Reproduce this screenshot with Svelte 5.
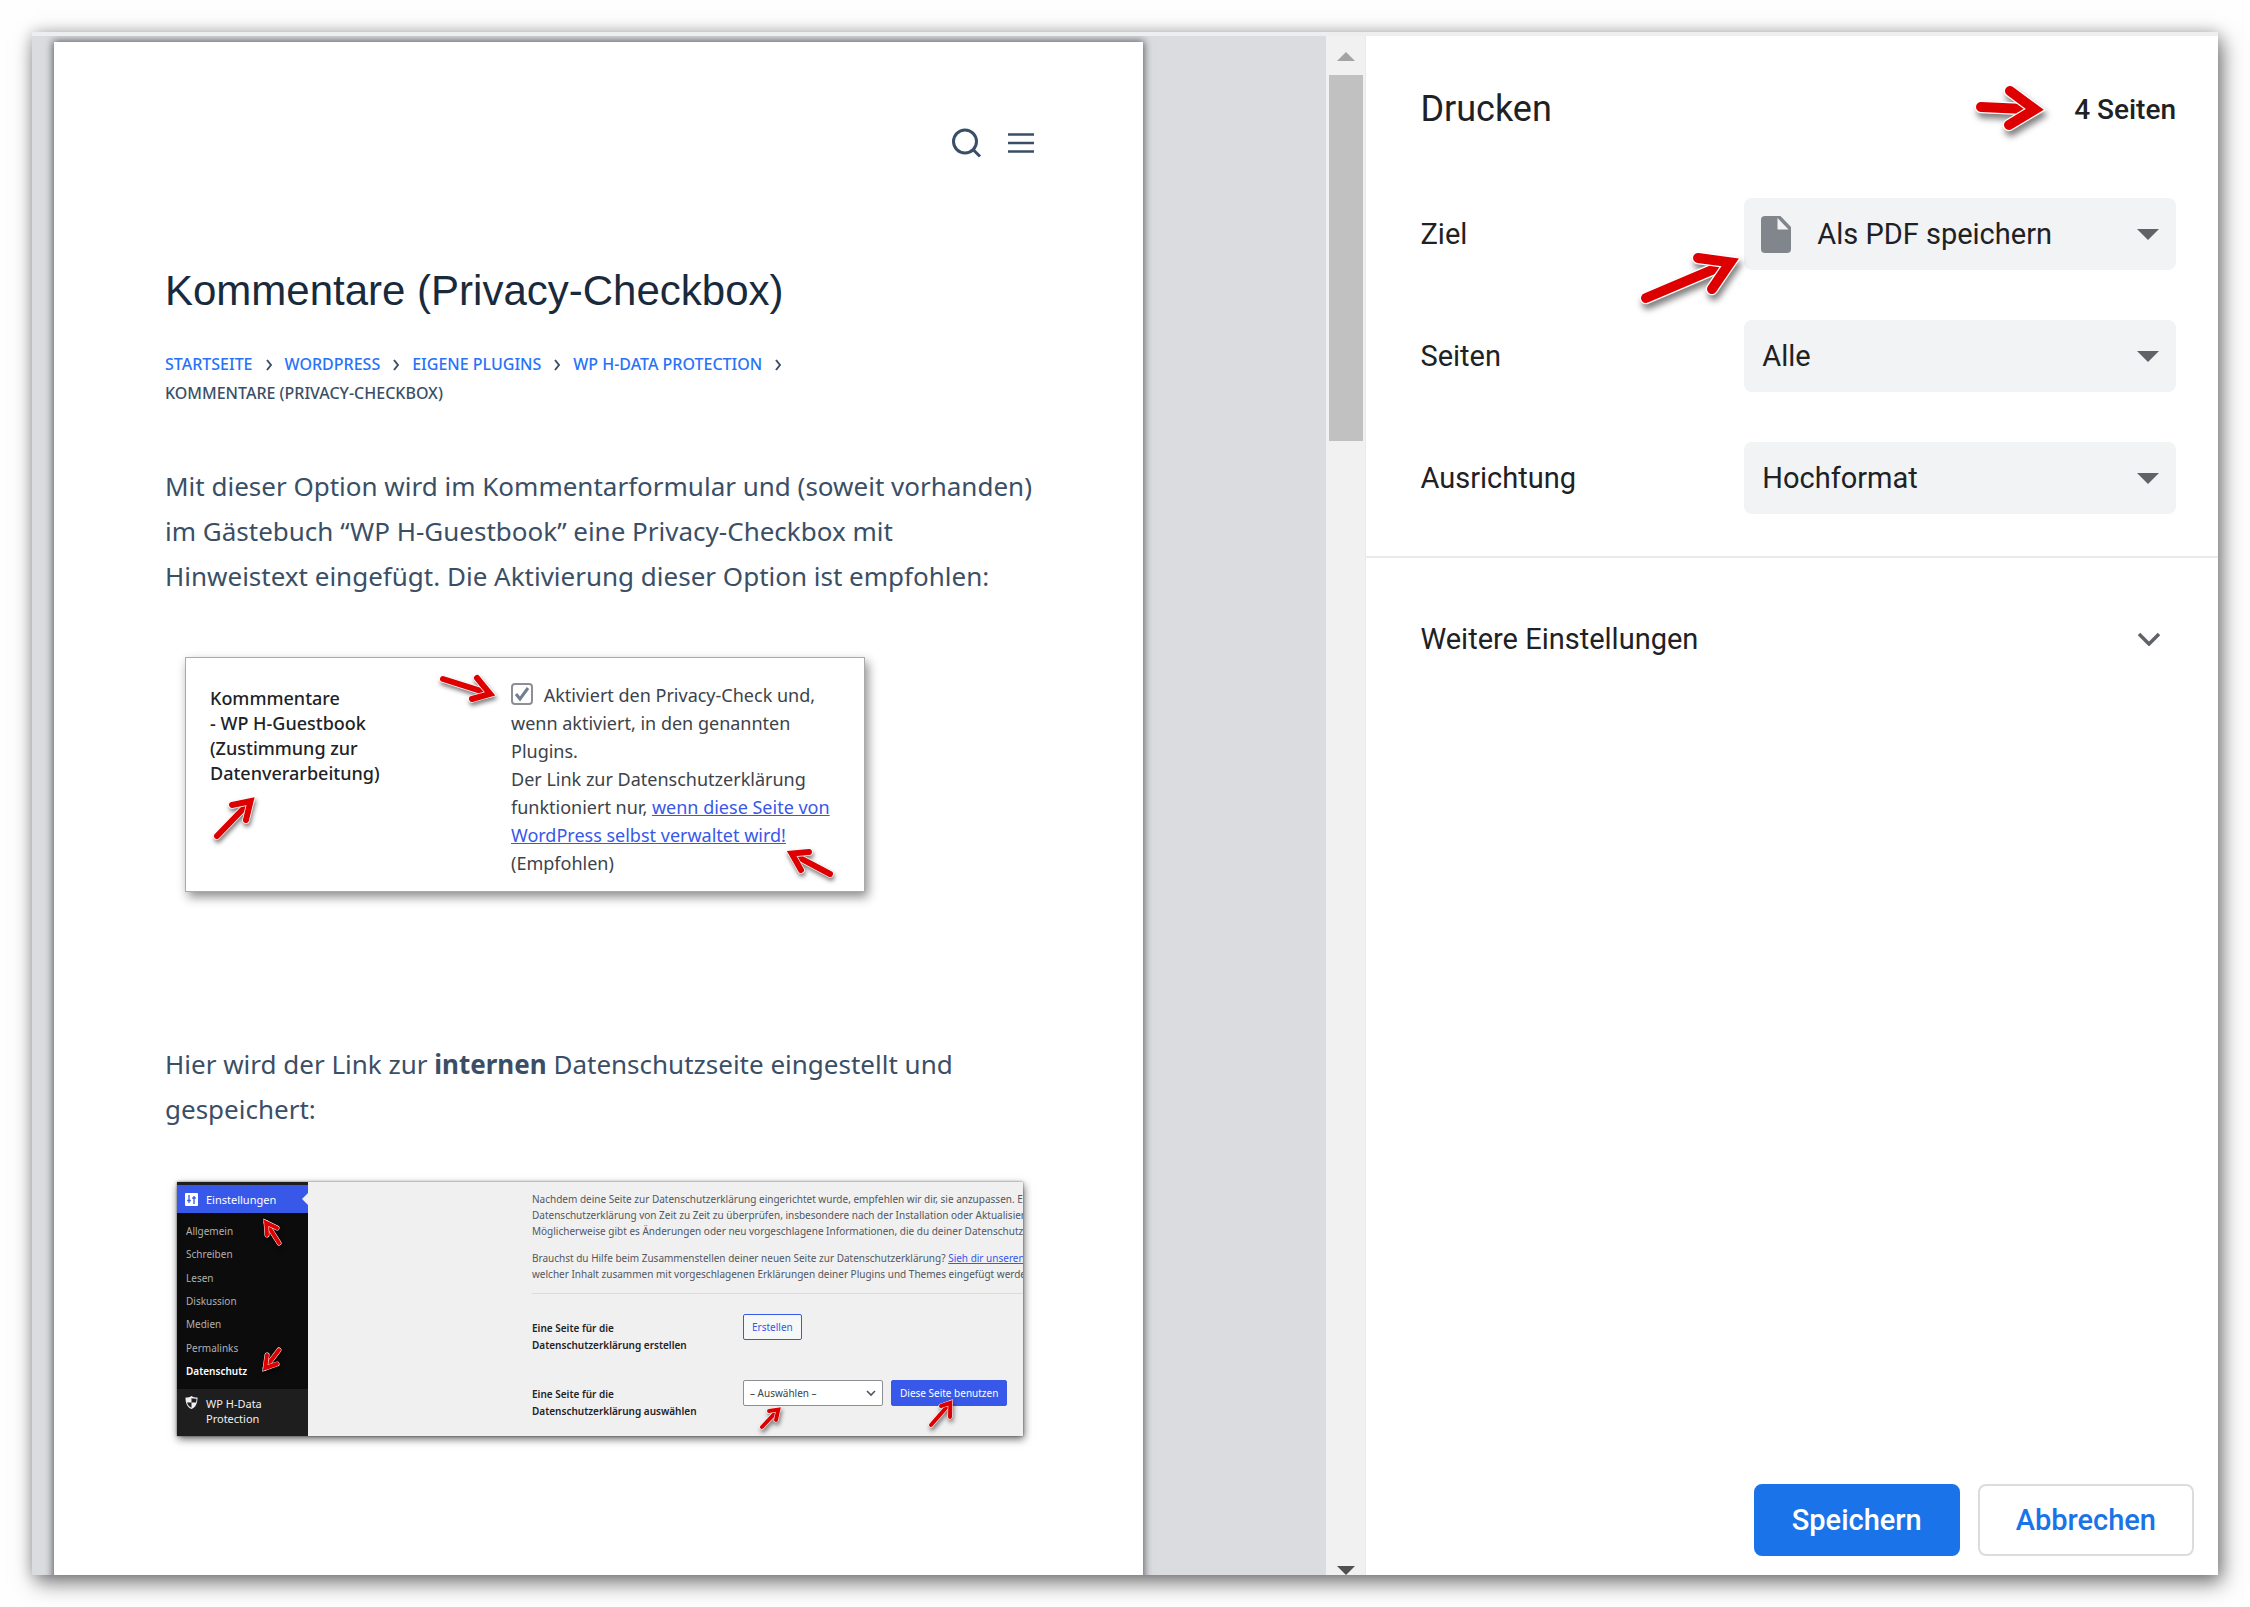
<script>
	let target = 'pdf';
	let pages = 'all';
	let layout = 'portrait';
	let privacyCheck = true;
	let privacyPage = '';

	const crumbs = ['Startseite', 'WordPress', 'Eigene Plugins', 'WP H-Data Protection'];
	const menu = ['Allgemein', 'Schreiben', 'Lesen', 'Diskussion', 'Medien', 'Permalinks', 'Datenschutz'];

	// each marker: start of the shaft, sharp tip, both ends of the head
	const cardMarks = [
		{ tail: [257, 21], tip: [311, 38], a: [291, 20], b: [286, 41] },
		{ tail: [31, 178], tip: [70, 138], a: [46, 147], b: [60, 162] },
		{ tail: [644, 216], tip: [599, 192], a: [623, 194], b: [615, 212] }
	];
	const adminMarks = [
		{ tail: [102, 61], tip: [86, 36], a: [100, 46], b: [90, 53] },
		{ tail: [102, 168], tip: [85, 190], a: [90, 173], b: [100, 182] },
		{ tail: [585, 245], tip: [605, 224], a: [592, 229], b: [599, 238] },
		{ tail: [754, 243], tip: [776, 217], a: [764, 224], b: [773, 235] }
	];

	function unit([x, y], [ox, oy]) {
		const len = Math.hypot(x - ox, y - oy);
		return [(x - ox) / len, (y - oy) / len];
	}

	// pull the joint back so that the mitred corner ends on the tip
	function joint({ tip, a, b }, width) {
		const u = unit(a, tip);
		const v = unit(b, tip);
		const mid = unit([u[0] + v[0], u[1] + v[1]], [0, 0]);
		const half = Math.acos(u[0] * v[0] + u[1] * v[1]) / 2;
		const back = width / 2 / Math.sin(half);
		return [tip[0] + mid[0] * back, tip[1] + mid[1] * back];
	}
</script>

{#snippet arrow(mark, width)}
	{@const j = joint(mark, width)}
	{@const shaft = `M${mark.tail} L${j}`}
	{@const head = `M${mark.a} L${j} L${mark.b}`}
	<g fill="none" stroke-linecap="round" stroke-miterlimit="8">
		<path d={shaft} stroke="#fff" stroke-width={width * 1.25} />
		<path d={shaft} stroke="#de0000" stroke-width={width} />
		<path d={head} stroke="#fff" stroke-width={width * 1.25} />
		<path d={head} stroke="#de0000" stroke-width={width} />
	</g>
{/snippet}

{#snippet caret()}
	<svg class="caret" width="22" height="11" viewBox="0 0 22 11" aria-hidden="true">
		<path d="M0 0h22L11 11z" fill="#5f6368" />
	</svg>
{/snippet}

<div class="dialog">
	<section class="preview">
		<div class="canvas">
			<article class="page">
				<header class="site-header">
					<button aria-label="Suche">
						<svg width="30" height="30" viewBox="0 0 30 30" fill="none" stroke="#3a4f66" stroke-width="3">
							<circle cx="13" cy="13.5" r="11.5" />
							<path d="M21 21.5l7 7" />
						</svg>
					</button>
					<button aria-label="Menü">
						<svg width="26" height="30" viewBox="0 0 26 30" stroke="#3a4f66" stroke-width="2.6">
							<path d="M0 6.5h26M0 15h26M0 23.5h26" />
						</svg>
					</button>
				</header>

				<h1>Kommentare (Privacy-Checkbox)</h1>

				<nav class="crumbs">
					{#each crumbs as crumb}
						<a href="#top">{crumb}</a>
						<svg width="6" height="12" viewBox="0 0 6 12" fill="none" stroke="#3a4f66" stroke-width="2">
							<path d="M1 1l4 5-4 5" />
						</svg>
					{/each}
					<span>Kommentare (Privacy-Checkbox)</span>
				</nav>

				<p class="intro">
					Mit dieser Option wird im Kommentarformular und (soweit vorhanden)<br />
					im Gästebuch “WP H-Guestbook” eine Privacy-Checkbox mit<br />
					Hinweistext eingefügt. Die Aktivierung dieser Option ist empfohlen:
				</p>

				<div class="card">
					<strong>Kommmentare<br />- WP H-Guestbook<br />(Zustimmung zur<br />Datenverarbeitung)</strong>
					<div class="card-text">
						<input id="privacy" type="checkbox" bind:checked={privacyCheck} />
						<label for="privacy">Aktiviert den Privacy-Check und,<br />wenn aktiviert, in den genannten<br />Plugins.</label><br />
						Der Link zur Datenschutzerklärung<br />
						funktioniert nur, <a href="#privacy">wenn diese Seite von<br />WordPress selbst verwaltet wird!</a><br />
						(Empfohlen)
					</div>
					<svg class="marks" aria-hidden="true">
						{#each cardMarks as mark}
							{@render arrow(mark, 6)}
						{/each}
					</svg>
				</div>

				<p class="second">
					Hier wird der Link zur <b>internen</b> Datenschutzseite eingestellt und<br />
					gespeichert:
				</p>

				<div class="admin">
					<div class="admin-side">
						<a class="current" href="#settings">
							<svg width="13" height="13" viewBox="0 0 13 13">
								<rect width="13" height="13" rx="1" fill="#fff" />
								<path d="M4 2v8M2.2 7.5h3.6M9 3v8M7.2 5h3.6" stroke="#3858e9" stroke-width="1.3" />
							</svg>
							Einstellungen
						</a>
						<ul>
							{#each menu as item}
								<li><a href="#settings" class:active={item === 'Datenschutz'}>{item}</a></li>
							{/each}
						</ul>
						<a class="plugin" href="#plugin">
							<svg width="13" height="13" viewBox="0 0 13 13">
								<path d="M6.5 0C5 1 3 1.5.5 1.5c0 5.500 1.500 9.500 6 11.500 4.500-2 6-6 6-11.500C10 1.500 8 1 6.500 0z" fill="#f0f0f0" />
								<path d="M6.500 2v4.500H11c.4-1.200.5-2.300.5-3.700-2 0-3.500-.2-5-.8zM6.500 6.500v5.200C4 10.500 2.600 8.700 2 6.500z" fill="#1e1e1e" />
							</svg>
							WP H-Data<br />Protection
						</a>
					</div>
					<div class="admin-main">
						<p>
							Nachdem deine Seite zur Datenschutzerklärung eingerichtet wurde, empfehlen wir dir, sie anzupassen. E<br />
							Datenschutzerklärung von Zeit zu Zeit zu überprüfen, insbesondere nach der Installation oder Aktualisier<br />
							Möglicherweise gibt es Änderungen oder neu vorgeschlagene Informationen, die du deiner Datenschutz
						</p>
						<p>
							Brauchst du Hilfe beim Zusammenstellen deiner neuen Seite zur Datenschutzerklärung? <a href="#guide">Sieh dir unseren</a><br />
							welcher Inhalt zusammen mit vorgeschlagenen Erklärungen deiner Plugins und Themes eingefügt werde
						</p>
						<hr />
						<div class="admin-row">
							<strong>Eine Seite für die<br />Datenschutzerklärung erstellen</strong>
							<button class="ghost">Erstellen</button>
						</div>
						<div class="admin-row">
							<label for="privacy-page">Eine Seite für die<br />Datenschutzerklärung auswählen</label>
							<div class="mini-select">
								<select id="privacy-page" bind:value={privacyPage}>
									<option value="">– Auswählen –</option>
								</select>
								<svg width="10" height="7" viewBox="0 0 10 7" fill="none" stroke="#50575e" stroke-width="1.6">
									<path d="M1 1l4 4 4-4" />
								</svg>
							</div>
							<button class="solid">Diese Seite benutzen</button>
						</div>
					</div>
					<svg class="marks" aria-hidden="true">
						{#each adminMarks as mark}
							{@render arrow(mark, 4)}
						{/each}
					</svg>
				</div>
			</article>
		</div>
		<div class="scrollbar">
			<svg width="18" height="9" viewBox="0 0 18 9"><path d="M0 9L9 0l9 9z" fill="#a3a3a3" /></svg>
			<div class="thumb"></div>
			<svg width="18" height="9" viewBox="0 0 18 9"><path d="M0 0h18L9 9z" fill="#505050" /></svg>
		</div>
	</section>

	<section class="settings">
		<header>
			<h2>Drucken</h2>
			<svg class="count-arrow" width="72" height="50" viewBox="0 0 72 50" aria-hidden="true">
				{@render arrow({ tail: [6, 23], tip: [72, 26], a: [35, 7], b: [34, 41] }, 10)}
			</svg>
			<span class="count">4 Seiten</span>
		</header>

		<div class="rows">
			<div class="row">
				<label for="target">Ziel</label>
				<div class="select with-icon">
					<svg class="doc" width="30" height="37" viewBox="0 0 30 37" aria-hidden="true">
						<path d="M4 0h15.500L30 11v22a4 4 0 0 1-4 4H4a4 4 0 0 1-4-4V4a4 4 0 0 1 4-4z" fill="#80868b" />
						<path d="M16.500 2v11.500H27.500z" fill="#f1f3f4" />
					</svg>
					<select id="target" bind:value={target}>
						<option value="pdf">Als PDF speichern</option>
					</select>
					{@render caret()}
					<svg class="target-arrow" width="106" height="56" aria-hidden="true">
						{@render arrow({ tail: [8, 48], tip: [104, 7], a: [60, 8], b: [74, 39] }, 10)}
					</svg>
				</div>
			</div>
			<div class="row">
				<label for="pages">Seiten</label>
				<div class="select">
					<select id="pages" bind:value={pages}>
						<option value="all">Alle</option>
					</select>
					{@render caret()}
				</div>
			</div>
			<div class="row">
				<label for="layout">Ausrichtung</label>
				<div class="select">
					<select id="layout" bind:value={layout}>
						<option value="portrait">Hochformat</option>
					</select>
					{@render caret()}
				</div>
			</div>
		</div>

		<button class="more">
			Weitere Einstellungen
			<svg width="24" height="14" viewBox="0 0 24 14" fill="none" stroke="#5f6368" stroke-width="3.500">
				<path d="M2 2l10 10L22 2" />
			</svg>
		</button>

		<footer>
			<button class="primary">Speichern</button>
			<button class="secondary">Abbrechen</button>
		</footer>
	</section>
</div>

<style>
	:global(body) {
		background: #fefefe;
	}

	.dialog {
		display: grid;
		grid-template-columns: 61fr 39fr;
		box-sizing: border-box;
		height: calc(100vh - 64px);
		margin: 32px;
		border-top: 4px solid #eceef0;
		background: white;
		box-shadow: 4px 8px 20px rgba(0, 0, 0, 0.5), 0 0 14px rgba(0, 0, 0, 0.2);
		font-family: Roboto, sans-serif;
		color: #202124;
	}

	button,
	select {
		font: inherit;
		cursor: pointer;
	}

	/* print preview */
	.preview {
		display: flex;
		min-width: 0;
		min-height: 0;
		overflow: hidden;
	}

	.canvas {
		flex: 1;
		min-width: 0;
		padding: 6px 183px 0 22px;
		overflow: hidden;
		background: #dadce0;
	}

	.page {
		box-sizing: border-box;
		min-height: 100%;
		padding: 86px 109px 160px 111px;
		background: white;
		box-shadow: 0 0 8px 1px rgba(0, 0, 0, 0.6);
		font-family: "Noto Sans", "Open Sans", sans-serif;
		color: #3a4f66;
		white-space: nowrap;
	}

	.site-header {
		display: flex;
		justify-content: flex-end;
		gap: 26px;
	}

	.site-header button {
		height: 30px;
		padding: 0;
		border: 0;
		background: none;
	}

	h1 {
		margin: 108px 0 0;
		font: 400 42px/50px "Liberation Sans", Arial, sans-serif;
		color: #192a3d;
	}

	.crumbs {
		display: flex;
		flex-wrap: wrap;
		align-items: center;
		column-gap: 13px;
		margin-top: 34px;
		font-size: 16px;
		font-weight: 500;
		line-height: 29px;
		text-transform: uppercase;
	}

	.crumbs a {
		color: #2872fa;
		text-decoration: none;
	}

	.intro,
	.second {
		margin: 56px 0 0;
		font-size: 26px;
		line-height: 45px;
	}

	.second {
		margin-top: 150px;
	}

	.marks {
		position: absolute;
		inset: 0;
		width: 100%;
		height: 100%;
		overflow: visible;
		pointer-events: none;
		filter: drop-shadow(1px 3px 2px rgba(0, 0, 0, 0.5));
	}

	.card {
		position: relative;
		display: grid;
		grid-template-columns: 301px 1fr;
		box-sizing: border-box;
		max-width: 680px;
		margin: 58px 0 0 20px;
		padding: 23px 24px 14px;
		border: 1px solid #aaa;
		background: white;
		box-shadow: 3px 5px 10px rgba(0, 0, 0, 0.45);
		color: #3c434a;
		font-size: 18px;
		line-height: 28px;
	}

	.card strong {
		padding-top: 5px;
		font-weight: 500;
		line-height: 25px;
		color: #1d2327;
	}

	.card a,
	.admin-main a {
		color: #3858e9;
	}

	.card input {
		appearance: none;
		width: 22px;
		height: 22px;
		margin: 0 6px 0 0;
		border: 2px solid #8c8f94;
		border-radius: 4px;
		vertical-align: -3px;
	}

	.card input:checked {
		background: center / 16px 16px no-repeat
			url("data:image/svg+xml,%3Csvg xmlns='http://www.w3.org/2000/svg' viewBox='0 0 16 16'%3E%3Cpath d='M2 8l4 5 8-11' fill='none' stroke='%23737f90' stroke-width='3'/%3E%3C/svg%3E");
	}

	.admin {
		position: relative;
		display: grid;
		grid-template-columns: 131px 1fr;
		max-width: 846px;
		height: 254px;
		margin: 50px 0 0 12px;
		background: #f0f0f1;
		box-shadow: 1px 3px 8px rgba(0, 0, 0, 0.6), 0 0 2px rgba(0, 0, 0, 0.5);
	}

	.admin-side {
		display: flex;
		flex-direction: column;
		background: #1e1e1e;
		font-size: 11px;
	}

	.admin-side a {
		color: #b0b0b0;
		text-decoration: none;
	}

	.admin-side .current {
		position: relative;
		display: flex;
		align-items: center;
		gap: 8px;
		height: 28px;
		margin-top: 3px;
		padding-left: 8px;
		background: #3858e9;
		color: white;
	}

	.current::after {
		content: "";
		position: absolute;
		right: 0;
		border: 6px solid transparent;
		border-right-color: #f0f0f1;
		border-left: 0;
	}

	.admin-side ul {
		display: flex;
		flex-direction: column;
		justify-content: space-between;
		box-sizing: border-box;
		height: 176px;
		margin: 0;
		padding: 10px 9px;
		background: #0c0c0c;
		list-style: none;
		font-size: 10px;
		line-height: 16px;
	}

	.admin-side .active {
		font-weight: 600;
		color: white;
	}

	.admin-side .plugin {
		display: grid;
		grid-template-columns: 13px 1fr;
		column-gap: 8px;
		padding: 7px 8px;
		line-height: 15px;
		color: #f0f0f0;
	}

	.plugin svg {
		grid-row: span 2;
	}

	.admin-main {
		min-width: 0;
		padding: 9px 0 0 224px;
		overflow: hidden;
		font-size: 10px;
		line-height: 16px;
		color: #50575e;
	}

	.admin-main p {
		margin: 0 0 11px;
	}

	hr {
		margin: 0;
		border: 0;
		border-top: 1px solid #dcdcde;
	}

	.admin-row {
		display: flex;
		align-items: flex-start;
		gap: 8px;
		height: 46px;
		padding-top: 20px;
	}

	.admin-row strong,
	.admin-row label {
		flex: 0 0 203px;
		padding-top: 6px;
		font-weight: 600;
		line-height: 17px;
		color: #1d2327;
	}

	.admin-row button {
		height: 26px;
		padding: 0 8px;
		border: 1px solid #3858e9;
		border-radius: 2px;
	}

	.ghost {
		background: #f6f7f7;
		color: #3858e9;
	}

	.solid {
		background: #3858e9;
		color: white;
	}

	.mini-select {
		position: relative;
	}

	.mini-select select {
		appearance: none;
		width: 140px;
		height: 26px;
		padding: 0 6px;
		border: 1px solid #8c8f94;
		border-radius: 2px;
		background: white;
		color: #3c434a;
	}

	.mini-select svg {
		position: absolute;
		top: 10px;
		right: 7px;
		pointer-events: none;
	}

	.scrollbar {
		display: flex;
		flex: 0 0 39px;
		flex-direction: column;
		align-items: center;
		padding-top: 16px;
		background: #f1f1f1;
	}

	.thumb {
		width: 34px;
		height: 24%;
		margin: 14px 0 auto;
		background: #c1c1c1;
	}

	/* settings */
	.settings {
		display: flex;
		flex-direction: column;
		min-width: 0;
		border-left: 1px solid #e8eaed;
		font-size: 29px;
	}

	.settings header {
		display: flex;
		align-items: center;
		padding: 48px 42px 0 54px;
	}

	h2 {
		flex: 1;
		margin: 0;
		font-size: 36px;
		font-weight: 400;
		line-height: 50px;
	}

	.count-arrow,
	.target-arrow {
		overflow: visible;
		filter: drop-shadow(2px 5px 3px rgba(0, 0, 0, 0.5));
	}

	.count {
		margin-left: 27px;
		font-size: 28px;
		font-weight: 500;
	}

	.rows {
		display: grid;
		gap: 50px;
		padding: 64px 42px 42px 54px;
		border-bottom: 2px solid #e8eaed;
	}

	.row {
		display: grid;
		grid-template-columns: 3fr 4fr;
		align-items: center;
	}

	.select {
		position: relative;
	}

	.select select {
		appearance: none;
		width: 100%;
		height: 72px;
		padding: 0 50px 0 18px;
		border: 0;
		border-radius: 8px;
		background: #f1f3f4;
		color: inherit;
	}

	.with-icon select {
		padding-left: 73px;
	}

	.caret {
		position: absolute;
		top: 31px;
		right: 17px;
		pointer-events: none;
	}

	.doc {
		position: absolute;
		top: 18px;
		left: 17px;
	}

	.target-arrow {
		position: absolute;
		top: 52px;
		left: -106px;
		pointer-events: none;
	}

	.more {
		display: flex;
		align-items: center;
		justify-content: space-between;
		height: 72px;
		margin-top: 45px;
		padding: 0 57px 0 54px;
		border: 0;
		background: none;
		color: inherit;
	}

	footer {
		display: flex;
		justify-content: flex-end;
		gap: 18px;
		margin-top: auto;
		padding: 0 24px 19px;
	}

	footer button {
		height: 72px;
		padding: 0 36px;
		border: 2px solid #dadce0;
		border-radius: 8px;
		font-weight: 500;
	}

	.primary {
		border-color: #1a73e8;
		background: #1a73e8;
		color: white;
	}

	.secondary {
		background: white;
		color: #1a73e8;
	}
</style>
